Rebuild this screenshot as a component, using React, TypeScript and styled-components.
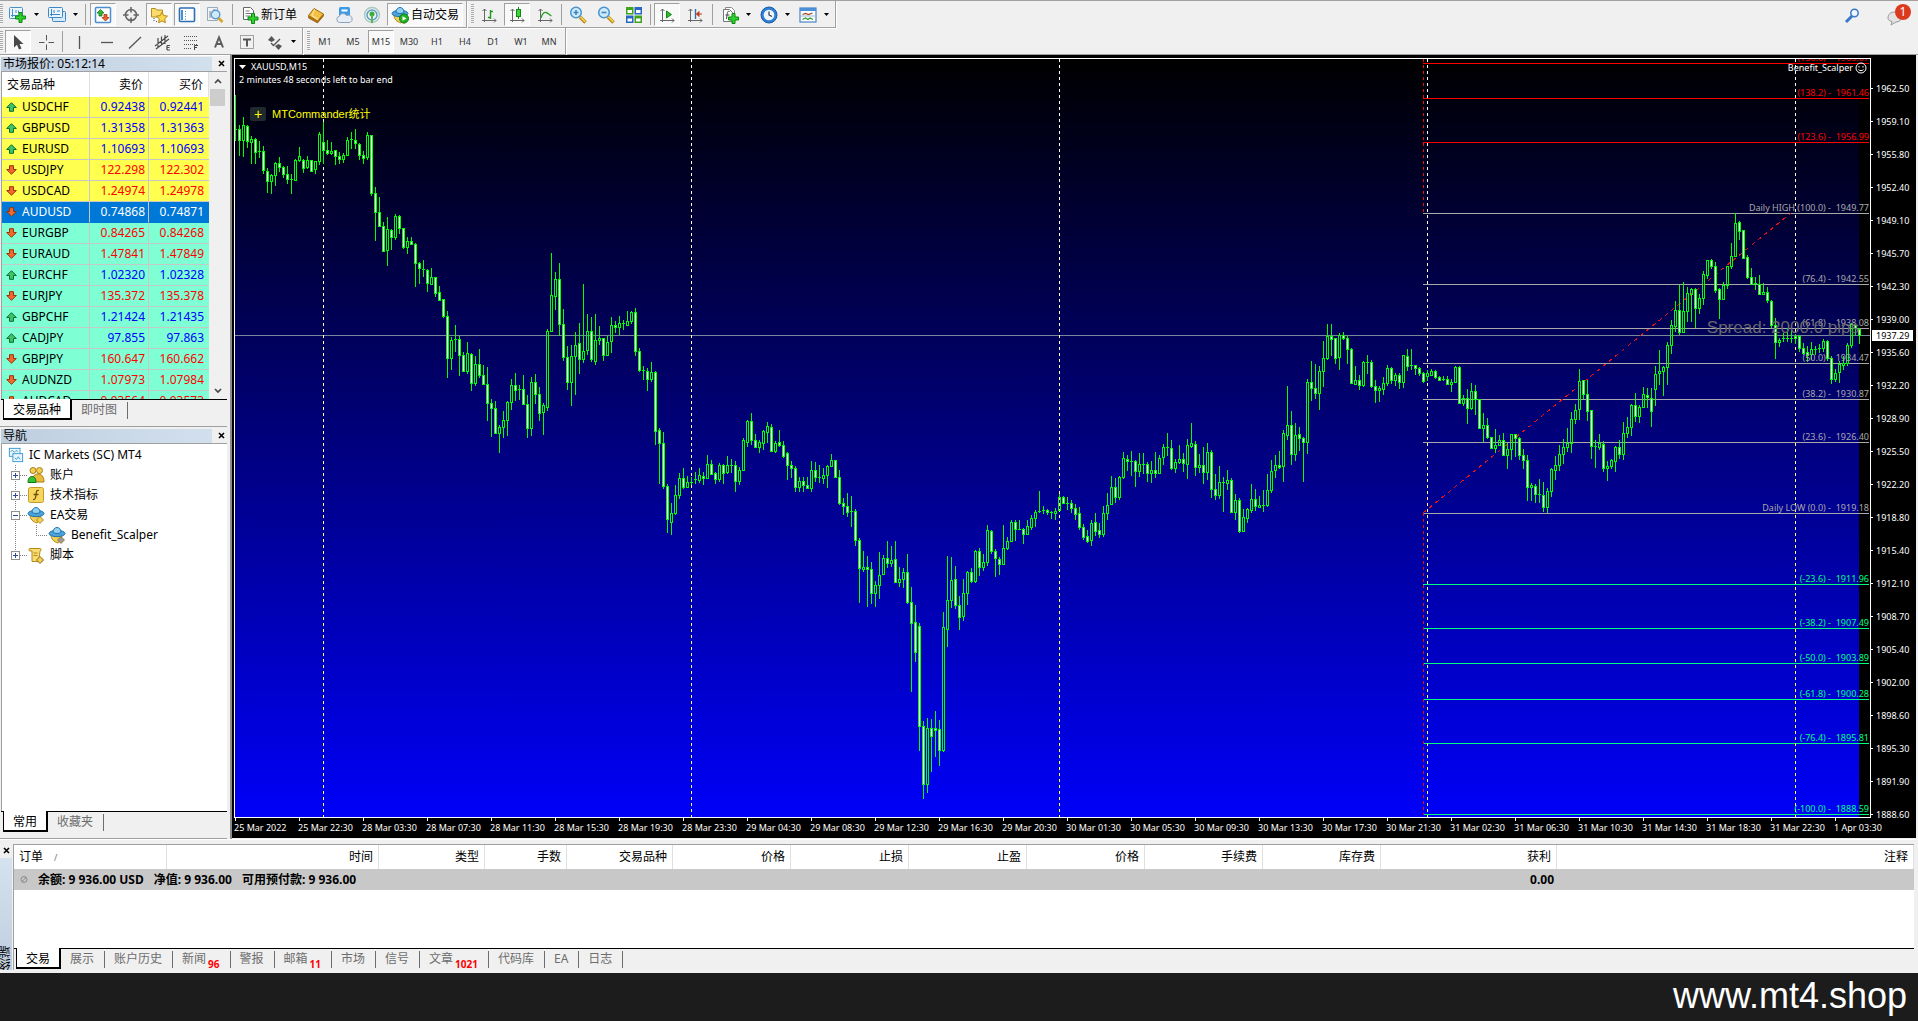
import React from "react";
import styled, { createGlobalStyle, css } from "styled-components";

/* ---------- base ---------- */

const UI_FONT = '"Noto Sans", "Noto Sans CJK SC", sans-serif';

const GlobalStyle = createGlobalStyle`
  *, *::before, *::after { box-sizing: border-box; }
  body { margin: 0; background: #f0f0f0; }
  button { font: inherit; color: inherit; background: none; border: 0; padding: 0; }
  ul { list-style: none; margin: 0; padding: 0; }
  svg { display: block; flex: none; }
`;

const Window = styled.div`
  display: flex;
  flex-direction: column;
  min-height: 100vh;
  font-family: ${UI_FONT};
  font-size: 12px;
  line-height: 16px;
  color: #000;
  background: #f0f0f0;
`;

/* ---------- toolbars ---------- */

const ToolbarArea = styled.header`
  display: flex;
  align-items: flex-start;
  justify-content: space-between;
  height: 55px;
  border-top: 1px solid #a0a0a0;
  border-bottom: 1px solid #a0a0a0;
`;

const ToolbarRows = styled.div`
  display: flex;
  flex-direction: column;
  align-items: flex-start;
`;

const ToolbarRow = styled.div`
  display: flex;
  height: 27px;
`;

const Toolbar = styled.div`
  display: flex;
  align-items: flex-start;
  height: 27px;
  padding: 2px 2px 0 0;
  border-right: 1px solid #a0a0a0;
  border-bottom: 1px solid #a0a0a0;
  box-shadow: 1px 1px 0 #fff;
  & + & { margin-left: 1px; padding-left: 3px; }
`;

const Grip = styled.span`
  width: 3px;
  height: 20px;
  margin: 1px 1px 0 0;
  background: repeating-linear-gradient(#a8a8a8 0 1px, #f6f6f6 1px 2px);
`;

const Divider = styled.span<{ $slim?: boolean }>`
  width: 1px;
  height: 21px;
  margin: 1px ${(p) => (p.$slim ? 2 : 3)}px 0;
  background: #a0a0a0;
`;

const ToolButton = styled.button<{ $pressed?: boolean; $small?: boolean }>`
  display: flex;
  align-items: center;
  justify-content: center;
  gap: 2px;
  min-width: 26px;
  height: 23px;
  margin: 0 1px;
  padding: 0 3px;
  white-space: nowrap;
  border: 1px solid transparent;
  ${(p) => p.$small && css`padding: 0; font-size: 9px; color: #333;`}
  ${(p) =>
    p.$pressed &&
    css`
      background: #f9f9f9;
      border-color: #a0a0a0 #fff #fff #a0a0a0;
    `}
`;

const DropButton = styled(ToolButton)`
  gap: 7px;
  width: 37px;
`;

const Caret = () => (
  <svg width="5" height="3" viewBox="0 0 5 3" aria-hidden="true">
    <path d="M0 0H5L2.5 3Z" fill="#000" />
  </svg>
);

const HeaderTools = styled.div`
  display: flex;
  gap: 17px;
  padding: 3px 5px 0 0;
`;

const MessageButton = styled.button`
  position: relative;
  width: 28px;
  height: 22px;
`;

const Badge = styled.span`
  position: absolute;
  top: 0;
  right: 2px;
  width: 16px;
  height: 16px;
  border-radius: 50%;
  font-size: 12px;
  line-height: 16px;
  text-align: center;
  color: #fff;
  background: #dc3a1e;
`;

/* ---------- toolbar icons ---------- */

type Draw = React.ReactNode;
const Ico = ({ children, size = 18 }: { children: Draw; size?: number }) => (
  <svg width={size} height={size} viewBox="0 0 18 18" fill="none" aria-hidden="true">
    {children}
  </svg>
);

const greenPlus = (x: number, y: number) => (
  <path
    transform={`translate(${x} ${y})`}
    d="M4 .5h3v3.5h3.5v3H7v3.5H4V7H.5V4H4Z"
    fill="#2fd02f"
    stroke="#0a8a0a"
  />
);

const axes = <path d="M4.5 3v13M2 14.5h14M2.5 5l2-2 2 2M14 12.5l2 2-2 2" stroke="#666" />;

const ufo = (chip: string) => (
  <>
    <path d="M3 9c0 4 3 7 7 8l3-3 1-5z" fill="#f1cf58" stroke="#b58a17" />
    <ellipse cx="9" cy="7.5" rx="8" ry="3.200" fill="#4ba3dc" stroke="#2273ad" />
    <path d="M5 6.5C5 3 7 1.5 9 1.5s4 1.5 4 5c-2 1.3-6 1.3-8 0z" fill="#8fd0f3" stroke="#2273ad" />
    <path d="M13 10.5l3.5 3.5-3.5 3.5L9.5 14z" fill={chip} stroke="#8a6d10" strokeWidth=".7" />
  </>
);

const page = (
  <>
    <path d="M2.5 1.5h7l3 3v9h-10z" fill="#fff" stroke="#666" />
    <path d="M4.5 5h4M4.5 7.5h6M4.5 10h5" stroke="#777" />
  </>
);

const magnifier = (sign: Draw) => (
  <>
    <path d="M11 11l5.5 5.5" stroke="#b07c10" strokeWidth="3.4" />
    <path d="M11.5 11l4.8 4.8" stroke="#f5cf4a" strokeWidth="1.8" />
    <circle cx="7" cy="6.5" r="5.3" fill="#cfeaf8" stroke="#4a93cc" strokeWidth="1.5" />
    {sign}
  </>
);

const ICONS: Record<string, Draw> = {
  newChart: (
    <>
      <rect x=".5" y="1.5" width="13" height="11" rx="1" fill="#eaf4fc" stroke="#4b8fc9" />
      <path d="M3.5 3v8M2 9.5h9M7 4v3M9.5 4.5v3" stroke="#4b8fc9" />
      {greenPlus(6, 6)}
    </>
  ),
  profiles: (
    <>
      <rect x="4.5" y="5.5" width="13" height="10" rx="1" fill="#d6eafa" stroke="#3f86c4" />
      <rect x=".5" y="1.5" width="14" height="10" rx="1" fill="#eaf4fc" stroke="#3f86c4" />
      <path d="M3.5 3v7M2 8.5h10M6 4v3M9 5h3" stroke="#3f86c4" />
    </>
  ),
  watch: (
    <>
      <rect x="1.5" y="1.5" width="15" height="15" rx="1" fill="#fff" stroke="#4a90d0" strokeWidth="1.5" />
      <path d="M6.5 3.5L10 7H8v3H5V7H3z" fill="#35b335" stroke="#117a11" strokeWidth=".8" />
      <path d="M11.5 15L8 11.5h2v-3h3v3h2z" fill="#f0612a" stroke="#a8340c" strokeWidth=".8" />
    </>
  ),
  target: (
    <path d="M9 1v5.5M9 11.5V17M1 9h5.5M11.5 9H17M14.5 9a5.5 5.5 0 1 1-11 0a5.5 5.5 0 0 1 11 0z" stroke="#666" strokeWidth="1.6" />
  ),
  favorites: (
    <>
      <path d="M1.5 2.5h4l1 1.5h6v7h-11z" fill="#f9dc6b" stroke="#b68d20" />
      <path d="M4 12v4M6 15.5h2" stroke="#555" strokeDasharray="1 1" />
      <path d="M12 6l1.7 3.6 3.8.5-2.8 2.7.7 3.9L12 14.9l-3.4 1.8.7-3.9-2.8-2.7 3.8-.5z" fill="#fcd94a" stroke="#b9871a" />
    </>
  ),
  dataWindow: (
    <>
      <rect x="1.5" y="2" width="15" height="13.5" rx="1" fill="#fff" stroke="#2d6fb5" strokeWidth="1.6" />
      <path d="M3 4h2v10H3z" fill="#4a90d0" />
      <path d="M7 5.5h1M7 8h1M7 10.5h1M7 13h1" stroke="#4a90d0" />
    </>
  ),
  tester: (
    <>
      <path d="M1.5 1.5h10v13h-10z" fill="#f0f4f8" stroke="#9ab" />
      <path d="M4 5v7M8 3v6" stroke="#888" />
      <path d="M12.5 12l4 4" stroke="#d9a72a" strokeWidth="2.8" />
      <circle cx="9.5" cy="8.5" r="4.3" fill="#cfeaf8" stroke="#5b9bcf" strokeWidth="1.4" />
    </>
  ),
  newOrder: <>{page}{greenPlus(6.5, 7)}</>,
  gold: (
    <>
      <path d="M1.5 9.5v2.5l9 5 6-7V8l-6 7z" fill="#b87410" stroke="#8b5a08" strokeWidth=".7" />
      <path d="M1.5 9.5L7 2.5 16.500 8l-6 7z" fill="#f4bf45" stroke="#a06c0c" />
      <path d="M7.500 3.500L5 9.500l6 4" stroke="#fbe29a" strokeWidth="1.200" />
    </>
  ),
  cloud: (
    <>
      <rect x="4" y="1" width="11" height="10" rx="1.500" fill="#3c9be8" />
      <path d="M6.500 3.500h6v2h-6z" fill="#fff" />
      <path d="M4.500 16.500a3.200 3.200 0 0 1-.2-6.300A4 4 0 0 1 11.500 9.500a3.500 3.500 0 0 1 3.500 7z" fill="#e7edf4" stroke="#8ca3ba" />
    </>
  ),
  signal: (
    <>
      <circle cx="9" cy="9" r="7.500" stroke="#a9cbbd" strokeWidth="1.500" />
      <circle cx="9" cy="9" r="5" stroke="#5a9fc8" strokeWidth="1.500" />
      <circle cx="9" cy="8" r="2.500" fill="#39ad39" />
      <path d="M9 9v8" stroke="#58b558" strokeWidth="2" />
    </>
  ),
  autoTrade: (
    <>
      {ufo("#f1cf58")}
      <circle cx="13" cy="12.500" r="4.500" fill="#25b325" stroke="#0c7d0c" />
      <path d="M11.500 10.200v4.600l4-2.300z" fill="#fff" />
    </>
  ),
  bars: <>{axes}<path d="M10.500 4v9M10.500 5.500H13M8 11.500h2.500" stroke="#1f9a1f" strokeWidth="1.400" /></>,
  candles: <>{axes}<path d="M10.500 1v12" stroke="#128a12" /><rect x="8.500" y="3.500" width="4" height="7" fill="#3fd03f" stroke="#128a12" /></>,
  line: <>{axes}<path d="M5 12c1-4 3-6 5-5.500S13 9 15.500 10" stroke="#2aa32a" strokeWidth="1.300" /></>,
  zoomIn: magnifier(<path d="M7 4v5M4.500 6.500h5" stroke="#3f86c4" strokeWidth="1.600" />),
  zoomOut: magnifier(<path d="M4.500 6.500h5" stroke="#3f86c4" strokeWidth="1.600" />),
  tile: (
    <>
      <path d="M1 1h7.500v7.500H1zM9.500 9.500H17V17H9.500z" fill="#3fa51f" />
      <path d="M9.500 1H17v7.500H9.500zM1 9.500h7.500V17H1z" fill="#2766c4" />
      <path d="M2.500 4H7v3H2.500zM11 4h4.500v3H11zM2.500 12.500H7v3H2.500zM11 12.500h4.500v3H11z" fill="#fff" />
    </>
  ),
  scroll: <>{axes}<path d="M8.500 5v7l5-3.500z" fill="#35b335" stroke="#128a12" /></>,
  shift: <>{axes}<path d="M9.500 3v10" stroke="#2d6fb5" strokeWidth="1.400" /><path d="M10.500 8h5.500M13 5.500L10.500 8l2.500 2.500z" stroke="#c23b12" fill="#c23b12" /></>,
  indicator: (
    <>
      <path d="M4.500 1.500h6l3 3v9h-9z" fill="#fff" stroke="#888" />
      <path d="M2.500 3.500h6l3 3v9h-9z" fill="#fff" stroke="#777" />
      <path d="M8.500 5.500c-2-.5-2 .5-2.200 2L5.500 13M4.500 9h4" stroke="#444" />
      {greenPlus(7, 7)}
    </>
  ),
  clock: (
    <>
      <circle cx="9" cy="9" r="8" fill="#2f7fd6" stroke="#1c5aa3" />
      <circle cx="9" cy="9" r="5.300" fill="#eef5fc" />
      <path d="M9 5.500V9l3 1.500" stroke="#334" strokeWidth="1.200" />
    </>
  ),
  template: (
    <>
      <rect x="1" y="2" width="16" height="14" fill="#fff" stroke="#4a84c4" strokeWidth="1.200" />
      <path d="M1 2h16v3H1z" fill="#4a90d8" />
      <path d="M3.500 8.500l3-1 3 1 4-1.500" stroke="#a5451d" strokeWidth="1.200" />
      <path d="M1 10h16" stroke="#9bb6d4" />
      <path d="M3.500 13.500l3-1.500 2.500 1.500 2-1.500 3 1.500" stroke="#2f9a2f" strokeWidth="1.200" />
    </>
  ),
  cursor: <path d="M5 2v12.500l3-2.700 2 4.700 2.500-1L10.500 11h4z" fill="#484848" />,
  cross: <path d="M9.500 2v5.500M9.500 11.500V17M2 9.500h5.500M11.500 9.500H17" stroke="#555" />,
  vline: <path d="M9.500 3v13" stroke="#555" strokeWidth="1.300" />,
  hline: <path d="M3 9.500h12" stroke="#555" strokeWidth="1.300" />,
  trend: <path d="M3 15.500L15 4" stroke="#555" strokeWidth="1.300" />,
  channel: <path d="M1 13L14 3M2 16L15 6M4 5v9M7.500 3.500V12M11 2v9M13 12.500h3M13 14.500h2.500M13 17h3M13 12.500V17" stroke="#4a4a4a" strokeWidth="1.200" />,
  fibo: (
    <>
      <path d="M2 3.500h14M2 7.500h14M2 11.500h14M2 15.500h8" stroke="#555" strokeDasharray="1 1" />
      <path d="M12.500 17v-4.500H16M12.500 14.500H15" stroke="#444" />
    </>
  ),
  textA: <path d="M5 14.500L9 4.500l4 10M6.500 11h5" stroke="#5c5c5c" strokeWidth="2" />,
  label: (
    <>
      <rect x="2.500" y="2.500" width="13" height="13" stroke="#555" strokeDasharray="1 1" />
      <path d="M5 6.500h8M9 6.500v7" stroke="#555" strokeWidth="2" />
    </>
  ),
  arrows: (
    <>
      <path d="M2 7l3.500-4L9 7 5.500 9zM9 13l3.500-2L16 13l-3.500 4z" fill="#555" />
      <path d="M5 10l2.500 2.500L14 6" stroke="#555" strokeWidth="1.400" />
    </>
  ),
};

const TIMEFRAMES = ["M1", "M5", "M15", "M30", "H1", "H4", "D1", "W1", "MN"];

const IconButton = ({ name, label, pressed }: { name: string; label: string; pressed?: boolean }) => (
  <ToolButton type="button" aria-label={label} aria-pressed={pressed} $pressed={pressed}>
    <Ico>{ICONS[name]}</Ico>
  </ToolButton>
);

const IconDrop = ({ name, label }: { name: string; label: string }) => (
  <DropButton type="button" aria-label={label}>
    <Ico>{ICONS[name]}</Ico>
    <Caret />
  </DropButton>
);

const Toolbars = () => (
  <ToolbarArea>
    <ToolbarRows>
      <ToolbarRow>
        <Toolbar>
          <Grip />
          <IconDrop name="newChart" label="新图表" />
          <IconDrop name="profiles" label="图表组" />
          <Divider />
          <IconButton name="watch" label="市场报价" pressed />
          <IconButton name="target" label="数据窗口" />
          <IconButton name="favorites" label="导航" pressed />
          <IconButton name="dataWindow" label="终端" pressed />
          <IconButton name="tester" label="策略测试" />
          <Divider />
          <ToolButton type="button">
            <Ico>{ICONS.newOrder}</Ico>新订单
          </ToolButton>
          <IconButton name="gold" label="编辑器" />
          <IconButton name="cloud" label="云服务" />
          <IconButton name="signal" label="信号" />
          <ToolButton type="button" $pressed aria-pressed>
            <Ico>{ICONS.autoTrade}</Ico>自动交易
          </ToolButton>
        </Toolbar>
        <Toolbar>
          <Grip />
          <IconButton name="bars" label="柱状图" />
          <IconButton name="candles" label="阴阳烛" pressed />
          <IconButton name="line" label="折线图" />
          <Divider $slim />
          <IconButton name="zoomIn" label="放大" />
          <IconButton name="zoomOut" label="缩小" />
          <IconButton name="tile" label="平铺" />
          <Divider $slim />
          <IconButton name="scroll" label="自动滚动" pressed />
          <IconButton name="shift" label="图表平移" />
          <Divider />
          <IconDrop name="indicator" label="指标" />
          <IconDrop name="clock" label="周期" />
          <IconDrop name="template" label="模板" />
        </Toolbar>
      </ToolbarRow>
      <ToolbarRow>
        <Toolbar>
          <Grip />
          <IconButton name="cursor" label="光标" pressed />
          <IconButton name="cross" label="十字准线" />
          <Divider $slim />
          <IconButton name="vline" label="垂直线" />
          <IconButton name="hline" label="水平线" />
          <IconButton name="trend" label="趋势线" />
          <IconButton name="channel" label="等距通道" />
          <IconButton name="fibo" label="斐波那契" />
          <IconButton name="textA" label="文字" />
          <IconButton name="label" label="标签" />
          <IconDrop name="arrows" label="箭头" />
        </Toolbar>
        <Toolbar>
          <Grip />
          {TIMEFRAMES.map((t) => (
            <ToolButton key={t} type="button" $small $pressed={t === "M15"}>
              {t}
            </ToolButton>
          ))}
        </Toolbar>
      </ToolbarRow>
    </ToolbarRows>
    <HeaderTools>
      <button type="button" aria-label="搜索">
        <svg width="24" height="20" viewBox="0 0 24 20" fill="none">
          <path d="M8 11l-6 6" stroke="#3a78c8" strokeWidth="3" />
          <circle cx="10.500" cy="8" r="3.700" fill="#eef6ff" stroke="#3a78c8" strokeWidth="1.500" />
        </svg>
      </button>
      <MessageButton type="button" aria-label="消息">
        <svg width="28" height="22" viewBox="0 0 28 22">
          <path d="M3 14c0-4 3-6 7-6s7 2 7 5-3 5-6 5l-5 3 1-3.500C4.500 17 3 16 3 14z" fill="#e3e3e3" stroke="#999" />
        </svg>
        <Badge>1</Badge>
      </MessageButton>
    </HeaderTools>
  </ToolbarArea>
);

/* ---------- side panels ---------- */

const Workspace = styled.main`
  display: flex;
  flex: 1;
  min-height: 0;
`;

const Sidebar = styled.aside`
  display: flex;
  flex-direction: column;
  width: 232px;
  flex: none;
  padding-right: 3px;
  border-right: 2px solid #8c8c8c;
`;

const Panel = styled.section<{ $grow?: boolean }>`
  display: flex;
  flex-direction: column;
  padding: 1px 0 5px 1px;
  border-bottom: 1px solid #a0a0a0;
  ${(p) => p.$grow && css`flex: 1;`}
`;

const PanelTitle = styled.div`
  display: flex;
  align-items: center;
  justify-content: space-between;
  height: 15px;
`;

const PanelName = styled.h2`
  flex: 1;
  margin: 0 3px 0 0;
  padding-left: 2px;
  font-size: 12px;
  font-weight: 400;
  line-height: 14px;
  background: linear-gradient(90deg, #bfcedf, #d2e0ee);
`;

const CloseButton = styled.button`
  display: flex;
  align-items: center;
  justify-content: center;
  width: 12px;
  height: 12px;
`;

const CloseMark = () => (
  <svg width="7" height="7" viewBox="0 0 7 7" aria-hidden="true">
    <path d="M1 1l5 5M6 1L1 6" stroke="#000" strokeWidth="1.600" />
  </svg>
);

const QuoteArea = styled.div`
  display: flex;
  height: 328px;
  overflow: hidden;
  border-top: 1px solid #a0a0a0;
  border-left: 1px solid #a0a0a0;
`;

const QuoteTable = styled.table`
  flex: 1;
  height: max-content;
  table-layout: fixed;
  border-collapse: separate;
  border-spacing: 0;
  background: #fff;
  th {
    height: 25px;
    padding: 0 5px;
    font-weight: 400;
    text-align: right;
    border-right: 1px solid #e0e0e0;
  }
  th:first-child { text-align: left; width: 88px; }
  th:nth-child(2) { width: 59px; }
`;

const QuoteRow = styled.tr<{ $tone: "near" | "far" | "selected"; $up: boolean }>`
  background: ${(p) => ({ near: "#ffff50", far: "#7fffd4", selected: "#0078d7" })[p.$tone]};
  color: ${(p) => (p.$tone === "selected" ? "#fff" : "#000")};
  td {
    height: 21px;
    padding: 0 3px;
    line-height: 20px;
    text-align: right;
    border-right: 1px solid #c8c8c8;
    border-bottom: 1px solid ${(p) => (p.$tone === "selected" ? "#0078d7" : "#c8c8c8")};
  }
  td + td { color: ${(p) => (p.$tone === "selected" ? "#fff" : p.$up ? "#00f" : "#f00")}; }
  td:last-child { padding-right: 5px; border-right: 0; }
`;

const SymbolCell = styled.span`
  display: flex;
  align-items: center;
  gap: 5px;
  padding-left: 1px;
`;

const Trend = ({ up }: { up: boolean }) => (
  <svg width="11" height="10" viewBox="0 0 11 10" aria-hidden="true">
    <path
      transform={up ? undefined : "rotate(180 5.5 5)"}
      d="M5.500 .7L10.300 5.500H7.500V9.300H3.500V5.500H.7z"
      fill={up ? "#3fc26a" : "#f06a30"}
      stroke={up ? "#0b6e2c" : "#9c3208"}
    />
  </svg>
);

const ScrollTrack = styled.div`
  display: flex;
  flex-direction: column;
  align-items: center;
  justify-content: space-between;
  width: 17px;
  margin-right: 1px;
  background: #f0f0f0;
`;

const ScrollButton = styled.button`
  display: flex;
  align-items: center;
  justify-content: center;
  width: 17px;
  height: 17px;
`;

const ScrollThumb = styled.div`
  width: 15px;
  height: 17px;
  margin-bottom: auto;
  background: #cdcdcd;
`;

const Chevron = ({ down }: { down?: boolean }) => (
  <svg width="8" height="6" viewBox="0 0 8 6" fill="none" aria-hidden="true">
    <path d={down ? "M1 1l3 3 3-3" : "M1 5l3-3 3 3"} stroke="#444" strokeWidth="1.600" />
  </svg>
);

const Tabs = styled.div`
  display: flex;
  align-items: flex-start;
  height: 22px;
  padding-left: 2px;
  border-top: 1px solid #000;
`;

const Tab = styled.button<{ $active?: boolean }>`
  display: flex;
  height: 17px;
  margin-top: 2px;
  padding: 0 10px 0 9px;
  line-height: 15px;
  white-space: nowrap;
  color: #6d6d6d;
  border-right: 1px solid #6d6d6d;
  ${(p) =>
    p.$active &&
    css`
      height: 21px;
      margin-top: -1px;
      padding: 0 9px;
      line-height: 21px;
      color: #000;
      background: #fff;
      border: solid #000;
      border-width: 0 2px 2px 1px;
    `}
`;

const Count = styled.span`
  align-self: flex-end;
  margin: 0 0 -4px 2px;
  font-size: 10px;
  font-weight: 700;
  color: #f00;
`;

type Quote = [string, string, string, boolean];
const QUOTES: Quote[] = [
  ["USDCHF", "0.92438", "0.92441", true],
  ["GBPUSD", "1.31358", "1.31363", true],
  ["EURUSD", "1.10693", "1.10693", true],
  ["USDJPY", "122.298", "122.302", false],
  ["USDCAD", "1.24974", "1.24978", false],
  ["AUDUSD", "0.74868", "0.74871", false],
  ["EURGBP", "0.84265", "0.84268", false],
  ["EURAUD", "1.47841", "1.47849", false],
  ["EURCHF", "1.02320", "1.02328", true],
  ["EURJPY", "135.372", "135.378", false],
  ["GBPCHF", "1.21424", "1.21435", true],
  ["CADJPY", "97.855", "97.863", true],
  ["GBPJPY", "160.647", "160.662", false],
  ["AUDNZD", "1.07973", "1.07984", false],
  ["AUDCAD", "0.93564", "0.93573", false],
];

const MarketWatch = () => (
  <Panel>
    <PanelTitle>
      <PanelName>市场报价: 05:12:14</PanelName>
      <CloseButton type="button" aria-label="关闭"><CloseMark /></CloseButton>
    </PanelTitle>
    <QuoteArea>
      <QuoteTable>
        <thead>
          <tr><th>交易品种</th><th>卖价</th><th>买价</th></tr>
        </thead>
        <tbody>
          {QUOTES.map(([symbol, bid, ask, up], i) => (
            <QuoteRow key={symbol} $up={up} $tone={i < 5 ? "near" : i === 5 ? "selected" : "far"}>
              <td><SymbolCell><Trend up={up} />{symbol}</SymbolCell></td>
              <td>{bid}</td>
              <td>{ask}</td>
            </QuoteRow>
          ))}
        </tbody>
      </QuoteTable>
      <ScrollTrack>
        <ScrollButton type="button" aria-label="向上"><Chevron /></ScrollButton>
        <ScrollThumb />
        <ScrollButton type="button" aria-label="向下"><Chevron down /></ScrollButton>
      </ScrollTrack>
    </QuoteArea>
    <Tabs>
      <Tab type="button" $active>交易品种</Tab>
      <Tab type="button">即时图</Tab>
    </Tabs>
  </Panel>
);

const Tree = styled.ul`
  flex: 1;
  padding-top: 1px;
  border-top: 1px solid #a0a0a0;
  border-left: 1px solid #a0a0a0;
  background: #fff;
`;

const TreeRow = styled.li`
  display: flex;
  align-items: center;
  height: 20px;
`;

const TreeText = styled.span`
  padding-left: 5px;
`;

const Guide = styled.svg`
  margin-left: 4px;
`;

/* Dotted connector with an optional expander box. */
const Branch = ({ kind, last }: { kind: "plus" | "minus" | "leaf"; last?: boolean }) =>
  kind === "leaf" ? (
    <Guide width="42" height="20" viewBox="0 0 42 20" shapeRendering="crispEdges" aria-hidden="true">
      <path d="M9.500 0v20M30.500 0v10.500H41" fill="none" stroke="#808080" strokeDasharray="1 1" />
    </Guide>
  ) : (
    <Guide width="21" height="20" viewBox="0 0 21 20" shapeRendering="crispEdges" aria-hidden="true">
      <path d={`M9.500 0V${last ? 10 : 20}M14 10.500h7`} fill="none" stroke="#808080" strokeDasharray="1 1" />
      <rect x="5.500" y="6.500" width="8" height="8" fill="#fff" stroke="#919191" />
      <path d={kind === "plus" ? "M7 10.500h5M9.500 8v5" : "M7 10.500h5"} stroke="#2b4b9b" />
    </Guide>
  );

const treeIcons = {
  accounts: (
    <>
      <circle cx="6" cy="4.500" r="3" fill="#f4cf55" stroke="#a97c12" />
      <circle cx="12.500" cy="4.500" r="3" fill="#f4cf55" stroke="#a97c12" />
      <path d="M5 16c0-5 2-8 6-8s6 3 6 8z" fill="#e9b93a" stroke="#a97c12" />
      <path d="M1 16.500c0-4 1.500-6 4-6s4 2 4 6z" fill="#35c335" stroke="#137813" />
    </>
  ),
  indicators: (
    <>
      <rect x="1.500" y="1.500" width="15" height="15" rx="2" fill="#f7d65e" stroke="#c59a27" />
      <path d="M12 4.500c-3-1-2.500 2-3 4.500s-.5 5-3 4.500M6.500 8.500h5" stroke="#6d5208" strokeWidth="1.300" />
    </>
  ),
  scripts: (
    <>
      <path d="M3 2.500h10c1.500 0 1.500 2.500 0 2.500l-1 8H15v2.500H5L5 5H3c-1.500 0-1.500-2.500 0-2.500z" fill="#f7dc74" stroke="#b58a17" />
      <path d="M6.500 7h4M6.500 9.500h4" stroke="#b58a17" />
      <path d="M13 10.500l3.500 3.500-3.500 3.500L9.500 14z" fill="#f1cf58" stroke="#8a6d10" />
    </>
  ),
  terminal: (
    <>
      <rect x="1.500" y="1.500" width="12" height="9" fill="#eaf6fd" stroke="#2f94d0" />
      <rect x="5.500" y="7.500" width="11" height="9" fill="#eaf6fd" stroke="#2f94d0" />
      <path d="M3 5l2-1 2 2 2-2 2 1M7.500 12l2 2 2-3 2 3" stroke="#2f94d0" />
    </>
  ),
};

const Navigator = () => (
  <Panel $grow>
    <PanelTitle>
      <PanelName>导航</PanelName>
      <CloseButton type="button" aria-label="关闭"><CloseMark /></CloseButton>
    </PanelTitle>
    <Tree>
      <TreeRow><Guide width="2" height="18" /><Ico size={16}>{treeIcons.terminal}</Ico><TreeText>IC Markets (SC) MT4</TreeText></TreeRow>
      <TreeRow><Branch kind="plus" /><Ico>{treeIcons.accounts}</Ico><TreeText>账户</TreeText></TreeRow>
      <TreeRow><Branch kind="plus" /><Ico>{treeIcons.indicators}</Ico><TreeText>技术指标</TreeText></TreeRow>
      <TreeRow><Branch kind="minus" /><Ico>{ufo("#f1cf58")}</Ico><TreeText>EA交易</TreeText></TreeRow>
      <TreeRow><Branch kind="leaf" /><Ico>{ufo("#9a9a9a")}</Ico><TreeText>Benefit_Scalper</TreeText></TreeRow>
      <TreeRow><Branch kind="plus" last /><Ico>{treeIcons.scripts}</Ico><TreeText>脚本</TreeText></TreeRow>
    </Tree>
    <Tabs>
      <Tab type="button" $active>常用</Tab>
      <Tab type="button">收藏夹</Tab>
    </Tabs>
  </Panel>
);

/* ---------- chart ---------- */

const SESSIONS = [
  {
    origin: 50,
    unit: 3,
    bars: `135,237,237,275 225,237,272,320d 201,226,272,323 225,229,275,296d 258,268,277,342 264,268,308,342d 273,304,308,326d
288,304,362,372d 355,364,395,429d 372,376,395,434 338,340,376,410 323,340,352,366d 350,352,373,384d 350,373,388,402d
372,388,392,432d 328,331,392,395 291,319,331,336 328,331,356,370d 318,331,353,357 330,331,363,366d 333,335,359,372
246,253,335,345 216,277,302,342d 270,301,311,315d 277,304,311,316 300,301,320,345d 308,319,328,342d 309,316,328,339
261,270,317,318 246,267,271,297 237,270,281,299d 279,283,317,330d 303,316,326,342d 246,256,322,330 255,256,430,438d
411,430,488,573d 443,487,530,531d 516,530,605,606d 503,538,602,648 537,541,563,602d 494,499,563,570 495,499,535,552d
534,535,593,597d 561,574,593,612 561,574,583,587d 579,583,640,711d 636,640,656,702d 630,658,661,681d 657,661,701,728d
654,682,703,706 681,682,731,741d 708,727,751,753d 747,748,800,806d 783,799,926,984d 861,871,926,960 825,867,870,906
858,868,917,978d 906,915,965,968d 876,910,965,972 909,913,1001,1025d 918,943,1001,1008 897,943,977,986d 945,976,1004,1007d
951,1003,1060,1113d 1048,1060,1074,1161d 1053,1075,1149,1151d 1125,1132,1149,1209 1083,1111,1131,1164 1053,1056,1111,1158
987,1006,1058,1080 969,1006,1021,1053d 1005,1018,1021,1050d 975,1018,1063,1064d 1035,1063,1136,1164d 981,997,1136,1158
972,997,1032,1064d 1011,1033,1091,1113d 1060,1066,1088,1155 837,844,1073,1085 609,736,844,847 666,688,738,780 639,688,823,858d
777,823,922,933d 888,922,998,1020d 885,919,998,1068 846,886,920,1035 819,880,929,972d 702,904,929,941 792,844,902,915
801,844,929,936d 792,871,935,945 828,865,872,886 864,866,917,933d 858,877,917,920 801,826,875,909 813,826,833,850d
798,820,833,855 810,820,824,840d 783,814,827,828 783,787,815,822 774,787,903,920d 894,904,962,966d 948,961,964,990d
954,964,989,1023d`,
  },
  {
    origin: 280,
    unit: 2.905,
    bars: `241,270,290,299 267,268,440,482d 430,438,475,595d 444,474,600,610d 595,599,697,735d 648,678,705,743 596,627,678,685
563,578,627,639 549,576,603,610d 572,588,603,607 575,588,591,598 560,580,583,595 549,567,583,592 558,570,577,598d
511,535,577,578 523,535,565,566d 558,563,580,595d 534,538,580,587 535,538,562,595d 514,540,560,564 520,538,542,563d
528,538,586,616d 544,553,586,598 459,467,553,555 407,412,471,488 389,412,466,482d 450,467,487,490d 467,473,487,505
436,441,474,494 415,427,443,476 421,428,498,502d 470,474,498,505 436,473,481,488d 470,482,514,518d 502,503,539,581d
527,538,548,578d 543,547,603,618d 575,585,603,618 573,585,598,618d 575,596,607,609d 528,553,607,616 531,553,574,587d
540,574,577,592d 547,567,577,595 540,541,568,607 508,523,542,546 523,524,574,575d 552,573,649,656d 636,648,657,685d
621,657,676,689d 630,672,676,720d 668,672,757,775d 752,756,838,941d 790,834,840,851 804,834,840,952d 822,840,911,944d
877,887,911,952 793,857,888,929 799,808,856,859 761,810,824,839d 775,814,824,836 761,811,879,881d 836,869,879,894
839,849,870,897 796,849,937,944d 894,936,998,1199d 947,994,1082,1112d 999,1008,1297,1371d 1283,1298,1465,1510d
1275,1302,1465,1493 1277,1302,1326,1432d 1254,1304,1308,1388d 1281,1305,1367,1414d 967,1010,1367,1373 804,930,1015,1069
807,872,931,955 833,869,945,958d 918,945,980,1019d 871,910,978,993 848,849,911,947 839,849,876,882d 785,790,876,883
781,788,834,862d 797,820,834,848 714,727,821,833 729,730,788,796d 784,788,808,865d 807,811,827,859d 714,779,827,828
749,759,781,787 700,704,760,761 700,704,725,761d 700,724,728,729d 723,724,738,769d 700,717,738,743 685,692,718,729
671,675,693,720 613,672,676,677 659,669,671,682 668,669,676,685d 672,675,678,697d 665,672,678,700`,
  },
  {
    origin: 300,
    unit: 3,
    bars: `583,592,632,633 588,592,611,612d 591,610,611,630d 600,610,626,639d 612,625,643,660d 621,640,683,690d 672,683,713,720d
690,710,725,729d 660,670,722,738 639,667,695,708d 669,691,704,714d 618,640,704,711 579,616,640,660 528,562,614,615
535,562,593,609d 528,532,593,600 456,475,532,537 465,478,485,513d 453,483,486,528d 481,484,515,561d 459,493,515,531
459,492,495,522d 486,493,521,546d 483,511,521,549 456,511,521,534d 465,475,520,522 432,441,473,495 399,441,444,468
420,445,506,510d 477,487,506,519 435,478,487,492 459,478,491,516d 417,436,494,537 369,430,438,444 423,433,503,528d
462,496,503,520 441,496,518,552d 429,457,518,540 450,457,569,594d 522,568,587,600d 498,547,587,597 532,547,551,636d
510,541,551,570 534,541,638,641d 582,601,638,660 594,601,695,699d 627,652,695,698 624,628,655,669 552,598,632,641
567,598,619,633d 588,617,621,624 570,615,618,636 522,571,617,621 480,514,572,579 465,496,512,534 453,496,502,507d
390,400,500,546 258,376,407,420 333,376,464,495d 369,406,464,483 381,403,416,453d 411,415,428,546d 237,247,428,462
183,247,266,303d 192,265,281,297d 198,214,281,330 123,175,214,261 72,108,176,180 72,108,119,168d 114,115,176,192d
99,107,173,210 96,107,116,120d 108,115,149,192d 144,148,250,252d 198,241,253,255 225,241,257,270d 183,187,257,261
165,186,189,222 180,187,260,264d 240,260,271,309d 258,264,272,306 231,249,269,285 195,205,250,258 201,205,241,252d
219,226,241,258 219,226,248,267d 165,166,248,264 147,169,200,213d 147,195,198,210 195,196,206,225d 201,206,221,228d
216,221,245,249d`,
  },
  {
    origin: 50,
    unit: 3,
    bars: `960,970,979,993 957,964,975,978 960,963,982,989d 978,982,991,993d 978,988,991,994d 978,988,1003,1004d 987,997,1003,1026
949,952,997,1000 948,952,1060,1064d 1035,1046,1060,1070 1017,1046,1076,1122d 999,1024,1076,1080 1007,1024,1047,1095d
1047,1048,1136,1137d 1089,1126,1136,1176 1104,1126,1163,1167d 1161,1163,1196,1198d 1137,1186,1196,1209 1155,1171,1187,1190
1149,1171,1216,1220d 1179,1198,1216,1257 1152,1153,1199,1231 1152,1153,1166,1222d 1162,1166,1216,1230d 1198,1216,1231,1257d
1216,1231,1312,1353d 1300,1306,1312,1353 1303,1309,1332,1359d 1287,1332,1336,1360d 1297,1336,1373,1386d 1314,1324,1373,1390
1254,1258,1325,1341 1218,1246,1261,1290 1185,1213,1247,1263 1167,1192,1213,1242 1136,1179,1192,1208 1086,1108,1179,1209
1062,1081,1108,1122 957,994,1078,1110 990,991,1033,1047d 990,1033,1084,1113d 1080,1081,1190,1227d 1170,1190,1193,1254
1152,1181,1192,1202 1174,1183,1256,1266d 1234,1249,1256,1293 1228,1231,1249,1257 1188,1192,1234,1266 1170,1192,1213,1227d
1117,1150,1213,1230 1101,1132,1150,1164 1063,1066,1132,1158 1029,1067,1099,1117d 1065,1072,1099,1119 1011,1033,1073,1076
1014,1035,1043,1074d 1014,1045,1084,1131d 949,973,1018,1069 900,964,971,1005 948,952,964,1038 878,886,952,1005
810,826,886,912 753,781,829,846 705,781,846,855d 697,784,846,850 711,730,784,817 714,718,733,816 714,717,775,835d
732,745,775,792 663,673,745,765 630,631,676,688 627,631,649,658d 637,649,721,730d 716,718,749,807d 697,706,749,750
648,649,706,717 579,619,649,658 490,520,619,622 513,517,544,570d 540,541,625,628d 616,622,682,687d 654,682,703,706d
681,700,703,720d 675,703,734,735d 700,727,732,735 711,727,752,759d 750,754,826,835d 804,826,878,927d 864,870,878,891
850,865,868,876 836,864,867,877 838,864,867,879 852,858,866,882 855,859,896,906d 879,896,909,915d 888,908,916,936d
876,898,914,930 889,898,902,915 882,896,899,909 867,874,896,906 870,874,925,933d 919,925,989,1002d 957,970,989,996
933,943,967,999 918,940,947,960 879,886,940,948 820,823,886,894 822,825,835,856d 834,837,856,882d`,
  },
];

const BAR_STEP = 4;
const FIRST_BAR = 235;

const CANDLES = SESSIONS.flatMap(({ origin, unit, bars }) =>
  bars.trim().split(/\s+/).map((bar) => {
    const [high, top, bottom, low] = bar
      .replace("d", "")
      .split(",")
      .map((v) => Math.floor(origin + Number(v) / unit));
    return { high, top, bottom, low, down: bar.endsWith("d") };
  }),
).map((c, i) => ({ ...c, x: FIRST_BAR + i * BAR_STEP }));

const DAY_LINES = [323, 691, 1059, 1427, 1795];

const RED = "#ff0000";
const GREY = "#a9a9a9";
const GREEN = "#00ff7f";
const LEVELS: [number, string, string][] = [
  [63, "(150.0) -  1965.07", RED],
  [98, "(138.2) -  1961.46", RED],
  [142, "(123.6) -  1956.99", RED],
  [213, "Daily HIGH (100.0) -  1949.77", GREY],
  [284, "(76.4) -  1942.55", GREY],
  [328, "(61.8) -  1938.08", GREY],
  [363, "(50.0) -  1934.47", GREY],
  [399, "(38.2) -  1930.87", GREY],
  [442, "(23.6) -  1926.40", GREY],
  [513, "Daily LOW (0.0) -  1919.18", GREY],
  [584, "(-23.6) -  1911.96", GREEN],
  [628, "(-38.2) -  1907.49", GREEN],
  [663, "(-50.0) -  1903.89", GREEN],
  [699, "(-61.8) -  1900.28", GREEN],
  [743, "(-76.4) -  1895.81", GREEN],
  [814, "(-100.0) -  1888.59", GREEN],
];

const PRICES = [
  "1962.50", "1959.10", "1955.80", "1952.40", "1949.10", "1945.70", "1942.30", "1939.00", "1935.60", "1932.20", "1928.90", "1925.50",
  "1922.20", "1918.80", "1915.40", "1912.10", "1908.70", "1905.40", "1902.00", "1898.60", "1895.30", "1891.90", "1888.60",
];

const TIMES = [
  "25 Mar 2022", "25 Mar 22:30", "28 Mar 03:30", "28 Mar 07:30", "28 Mar 11:30", "28 Mar 15:30", "28 Mar 19:30", "28 Mar 23:30",
  "29 Mar 04:30", "29 Mar 08:30", "29 Mar 12:30", "29 Mar 16:30", "29 Mar 20:30", "30 Mar 01:30", "30 Mar 05:30", "30 Mar 09:30",
  "30 Mar 13:30", "30 Mar 17:30", "30 Mar 21:30", "31 Mar 02:30", "31 Mar 06:30", "31 Mar 10:30", "31 Mar 14:30", "31 Mar 18:30",
  "31 Mar 22:30", "1 Apr 03:30",
];

const PLOT_TOP = 59;

const ChartWindow = styled.section`
  display: grid;
  flex: 1;
  min-width: 0;
  grid-template-columns: minmax(0, 1fr) 45px;
  grid-template-rows: minmax(0, 1fr) 20px;
  margin: 0 2px 1px 0;
  padding: 3px 0 0 2px;
  overflow: hidden;
  font-size: 9px;
  line-height: 12px;
  color: #fff;
  background: #000;
`;

const Plot = styled.div`
  position: relative;
  overflow: hidden;
  min-height: 760px;
  border: 1px solid #fff;
  background: linear-gradient(#000, #0000f8) no-repeat 0 0 / calc(100% - 11px) 100%, #000;
`;

const PlotHeading = styled.div`
  position: absolute;
  top: 2px;
  left: 4px;
  display: flex;
  flex-direction: column;
  gap: 1px;
`;

const PlotSymbol = styled.span`
  display: flex;
  align-items: center;
  gap: 5px;
`;

const StatsToggle = styled.div`
  position: absolute;
  top: 47px;
  left: 15px;
  display: flex;
  align-items: center;
  gap: 6px;
  font-family: "Liberation Sans", "Noto Sans CJK SC", sans-serif;
  font-size: 11px;
  line-height: 16px;
  color: #ff0;
  button {
    width: 16px;
    height: 14px;
    font-size: 14px;
    line-height: 14px;
    border-radius: 2px;
    background: #20292c;
  }
`;

const ExpertName = styled.div`
  position: absolute;
  top: 3px;
  right: 3px;
  display: flex;
  align-items: center;
  gap: 2px;
`;

const Spread = styled.div`
  position: absolute;
  top: 259px;
  right: 11px;
  font-family: "Liberation Sans", sans-serif;
  font-size: 17px;
  line-height: 20px;
  color: #696969;
`;

const LevelLabel = styled.div<{ $y: number; $color: string }>`
  position: absolute;
  top: ${(p) => p.$y - PLOT_TOP - 11}px;
  right: 1px;
  white-space: pre;
  color: ${(p) => p.$color};
`;

/* The last price sits level with the plot's floor, so its row reaches over the time axis. */
const PriceAxis = styled.ul`
  position: relative;
  margin-bottom: -20px;
  padding-top: 14px;
`;

const PriceTick = styled.li`
  display: flex;
  align-items: center;
  gap: 3px;
  height: 33px;
  &::before { content: ""; width: 2px; height: 1px; background: #fff; }
`;

const CurrentPrice = styled.li`
  position: absolute;
  top: 272px;
  left: 1px;
  width: 41px;
  height: 11px;
  padding-left: 4px;
  line-height: 11px;
  color: #000;
  background: #fff;
`;

const TimeAxis = styled.ul`
  display: flex;
  grid-column: 1 / -1;
`;

const TimeTick = styled.li`
  flex: none;
  width: 64px;
  white-space: nowrap;
  &::before { content: ""; display: block; width: 1px; height: 3px; margin: 0 0 1px 1px; background: #fff; }
`;

const Drawing = () => (
  <svg width="1635" height="758" viewBox="235 59 1635 758" overflow="visible" shapeRendering="crispEdges" aria-hidden="true">
    <defs>
      <linearGradient id="dayLine" gradientUnits="userSpaceOnUse" x1="0" y1="59" x2="0" y2="817">
        <stop offset="0" stopColor="#ffffff" />
        <stop offset=".5" stopColor="#ffffb0" />
        <stop offset="1" stopColor="#ffff50" />
      </linearGradient>
    </defs>
    <rect x="235" y="335" width="4000" height="1" fill="#778899" />
    {LEVELS.map(([y, , color]) => (
      <rect key={y} x="1423" y={y} width="446" height="1" fill={color} />
    ))}
    <path d="M1423.500 59V213M1423.500 513V815" stroke="#e01010" strokeDasharray="3 3" />
    <path d="M1423 513L1791 213" stroke="#f01010" strokeDasharray="4 4" />
    {DAY_LINES.map((x) => (
      <path key={x} d={`M${x + 0.5} 59L${x + 0.501} 817`} stroke="url(#dayLine)" strokeDasharray="3 3" />
    ))}
    {CANDLES.map(({ x, high, top, bottom, low, down }) => (
      <g key={x} fill="#00ff00">
        {top > high && <rect x={x} y={high} width="1" height={top - high} />}
        {low > bottom && <rect x={x} y={bottom} width="1" height={low - bottom} />}
        {bottom - top < 2 ? (
          <rect x={x - 1} y={top} width="3" height={bottom - top || 1} />
        ) : (
          <rect x={x - 0.5} y={top + 0.5} width="2" height={bottom - top} fill={down ? "#ffffff" : "none"} stroke="#00ff00" />
        )}
      </g>
    ))}
  </svg>
);

const Chart = () => (
  <ChartWindow>
    <Plot>
      <Drawing />
      <PlotHeading>
        <PlotSymbol>
          <svg width="7" height="4" viewBox="0 0 7 4" aria-hidden="true"><path d="M0 0h7L3.500 4z" fill="#fff" /></svg>
          XAUUSD,M15
        </PlotSymbol>
        <span>2 minutes 48 seconds left to bar end</span>
      </PlotHeading>
      <StatsToggle>
        <button type="button" aria-label="展开">+</button>
        <span>MTCommander统计</span>
      </StatsToggle>
      {LEVELS.map(([y, text, color]) => (
        <LevelLabel key={y} $y={y} $color={color}>{text}</LevelLabel>
      ))}
      <Spread>Spread: 2000.0 pips</Spread>
      <ExpertName>
        Benefit_Scalper
        <svg width="12" height="12" viewBox="0 0 12 12" fill="none" stroke="#fff" aria-hidden="true">
          <circle cx="6" cy="6" r="5" />
          <path d="M4 4v1.500M8 4v1.500M3.500 7.500c1 1.500 4 1.500 5 0" />
        </svg>
      </ExpertName>
    </Plot>
    <PriceAxis>
      {PRICES.map((p) => <PriceTick key={p}>{p}</PriceTick>)}
      <CurrentPrice>1937.29</CurrentPrice>
    </PriceAxis>
    <TimeAxis>
      {TIMES.map((t) => <TimeTick key={t}>{t}</TimeTick>)}
    </TimeAxis>
  </ChartWindow>
);

/* ---------- terminal ---------- */

const Terminal = styled.section`
  display: flex;
  height: 134px;
  padding: 4px 4px 3px 0;
  border-top: 1px solid #fff;
`;

const TerminalStrip = styled.div`
  display: flex;
  flex-direction: column;
  align-items: center;
  width: 13px;
  flex: none;
`;

const StripTitle = styled.h2`
  display: flex;
  flex: 1;
  width: 12px;
  margin: 2px 1px 0 0;
  overflow: hidden;
  font-size: 12px;
  font-weight: 400;
  line-height: 12px;
  background: linear-gradient(#d5e3f0, #bfcddd);
  span {
    writing-mode: vertical-rl;
    transform: rotate(180deg);
  }
`;

const TerminalBody = styled.div`
  display: flex;
  flex: 1;
  flex-direction: column;
  min-width: 0;
  border-top: 1px solid #a0a0a0;
  border-left: 1px solid #a0a0a0;
`;

const OrdersPane = styled.div`
  flex: 1;
  background: #fff;
`;

const Orders = styled.table`
  width: 100%;
  table-layout: fixed;
  border-collapse: separate;
  border-spacing: 0;
  th {
    height: 24px;
    padding: 0 5px;
    font-weight: 400;
    text-align: right;
    border-right: 1px solid #e0e0e0;
  }
  th:first-child { text-align: left; }
  td {
    height: 21px;
    padding: 0 3px 0 6px;
    line-height: 20px;
    font-weight: 700;
    text-align: right;
    background: #c8c8c8;
  }
`;

const Balance = styled.span`
  display: flex;
  align-items: center;
  gap: 10px;
`;

const SortMark = styled.span`
  padding-left: 11px;
  font-size: 9px;
  color: #777;
`;

const COLUMNS: [string, number | undefined][] = [
  ["订单", 153], ["时间", 212], ["类型", 106], ["手数", 82], ["交易品种", 106], ["价格", 118], ["止损", 118],
  ["止盈", 118], ["价格", 118], ["手续费", 118], ["库存费", 118], ["获利", 176], ["注释", undefined],
];

const TERMINAL_TABS: [string, string?][] = [
  ["交易"], ["展示"], ["账户历史"], ["新闻", "96"], ["警报"], ["邮箱", "11"], ["市场"], ["信号"], ["文章", "1021"], ["代码库"], ["EA"], ["日志"],
];

const TerminalPanel = () => (
  <Terminal>
    <TerminalStrip>
      <CloseButton type="button" aria-label="关闭"><CloseMark /></CloseButton>
      <StripTitle><span>终端</span></StripTitle>
    </TerminalStrip>
    <TerminalBody>
      <OrdersPane>
        <Orders>
          <colgroup>
            {COLUMNS.map(([, width], i) => <col key={i} width={width} />)}
          </colgroup>
          <thead>
            <tr>
              {COLUMNS.map(([name], i) => (
                <th key={i}>{name}{i === 0 && <SortMark>/</SortMark>}</th>
              ))}
            </tr>
          </thead>
          <tbody>
            <tr>
              <td colSpan={11}>
                <Balance>
                  <svg width="8" height="9" viewBox="0 0 8 9" fill="none" stroke="#8a8a8a" aria-hidden="true">
                    <circle cx="4" cy="4.500" r="3" />
                    <path d="M2 7l4-5" />
                  </svg>
                  <span>余额: 9 936.00 USD</span>
                  <span>净值: 9 936.00</span>
                  <span>可用预付款: 9 936.00</span>
                </Balance>
              </td>
              <td>0.00</td>
              <td />
            </tr>
          </tbody>
        </Orders>
      </OrdersPane>
      <Tabs>
        {TERMINAL_TABS.map(([name, count], i) => (
          <Tab key={name} type="button" $active={i === 0}>
            {name}
            {count && <Count>{count}</Count>}
          </Tab>
        ))}
      </Tabs>
    </TerminalBody>
  </Terminal>
);

const Footer = styled.footer`
  height: 48px;
  padding-right: 11px;
  font-family: "Liberation Sans", Arial, sans-serif;
  font-size: 36px;
  line-height: 46px;
  text-align: right;
  color: #fff;
  background: #1c1c1c;
`;

export default function App() {
  return (
    <>
      <GlobalStyle />
      <Window>
        <Toolbars />
        <Workspace>
          <Sidebar>
            <MarketWatch />
            <Navigator />
          </Sidebar>
          <Chart />
        </Workspace>
        <TerminalPanel />
        <Footer>www.mt4.shop</Footer>
      </Window>
    </>
  );
}
